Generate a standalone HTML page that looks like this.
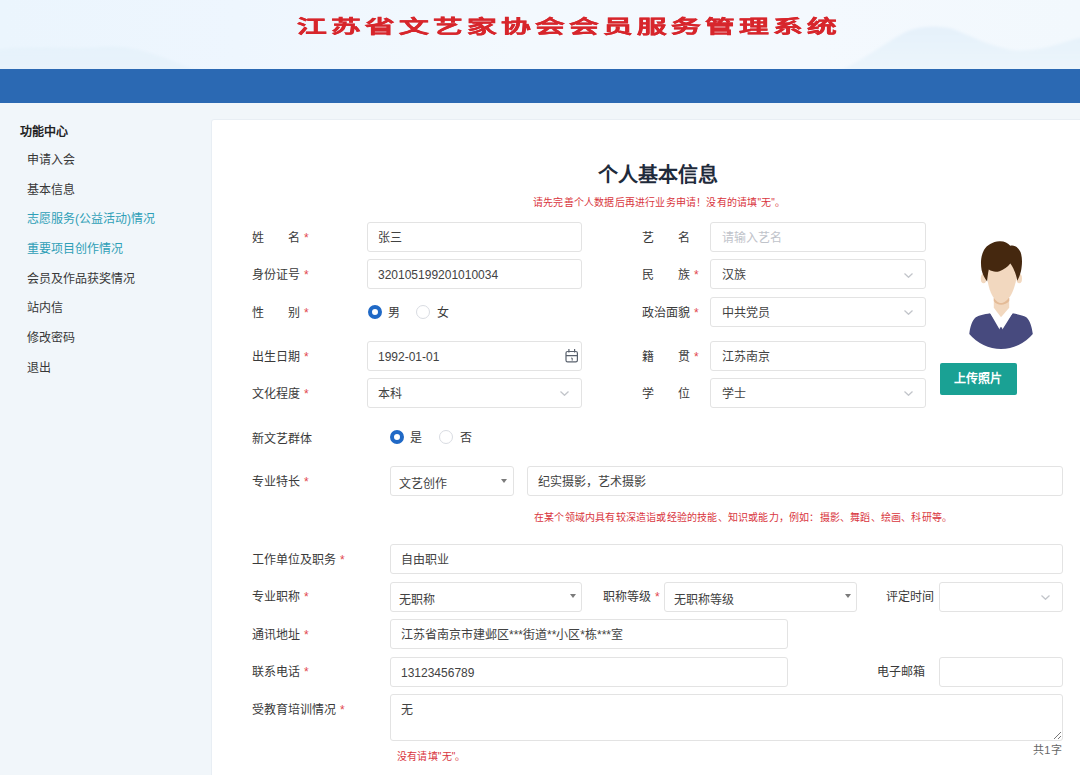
<!DOCTYPE html>
<html lang="zh-CN">
<head>
<meta charset="utf-8">
<title>江苏省文艺家协会会员服务管理系统</title>
<style>
*{box-sizing:border-box;margin:0;padding:0}
html,body{width:1080px;height:775px;overflow:hidden}
body{position:relative;background:#f1f6fa;font-family:"Liberation Sans",sans-serif;font-size:12px;color:#333;line-height:1}
.abs{position:absolute}
/* header */
#hd{position:absolute;left:0;top:0;width:1080px;height:69px;background:linear-gradient(90deg,#ebf5fd 0%,#eef6fe 22%,#f3f9fe 48%,#f4f9fe 75%,#f2f8fd 100%);overflow:hidden}
#hd svg{position:absolute;left:0;top:0}
#hd h1{position:absolute;left:296.5px;top:12.5px;width:400px;height:28px;font-family:"Liberation Serif",serif;font-weight:bold;font-size:18px;line-height:28px;color:#d7262c;white-space:nowrap;transform-origin:0 50%;transform:scaleX(1.65);letter-spacing:2.6px;-webkit-text-stroke:.35px #d7262c}
#bar{position:absolute;left:0;top:68.5px;width:1080px;height:34px;background:#2b69b3}
/* sidebar */
#side{position:absolute;left:0;top:103px;width:212px}
#side .t{position:absolute;left:20px;top:22px;font-weight:bold;font-size:12px;line-height:14px;color:#222;white-space:nowrap}
#side a{position:absolute;left:27px;font-size:12px;line-height:14px;color:#383838;text-decoration:none;white-space:nowrap}
#side a.on{color:#2f9fb7}
/* panel */
#panel{position:absolute;left:211px;top:119px;width:880px;height:700px;background:#fff;border:1px solid #e8eef4;border-radius:3px}
h2{position:absolute;left:538px;top:161px;width:240px;text-align:center;font-size:20px;line-height:28px;font-weight:bold;color:#1f2b3b;white-space:nowrap}
.tip{position:absolute;font-size:10px;letter-spacing:.2px;line-height:12px;color:#d9363e;white-space:nowrap}
.lb{position:absolute;font-size:12px;line-height:14px;color:#3a3a3a;white-space:nowrap}
.lb i{font-style:normal;color:#e2474e;margin-left:4px}
.lb .sp{display:inline-block;width:24px}
.in{position:absolute;height:30px;border:1px solid #e3e3e3;border-radius:3px;background:#fff;font-size:12px;line-height:28px;padding-top:1px;color:#424242;padding-left:10px;white-space:nowrap;overflow:hidden}
.in.ph{color:#bfc3ca}
.chev{position:absolute;width:9px;height:5px}
.tri{position:absolute;width:0;height:0;border-left:3.5px solid transparent;border-right:3.5px solid transparent;border-top:4.5px solid #7b7b7b}
.rd{position:absolute;width:14px;height:14px;border-radius:50%;border:1px solid #d9dce2;background:#fff}
.rd.on{border:4.5px solid #2069c6;background:#fff}
.rt{position:absolute;font-size:12px;line-height:14px;color:#3a3a3a}
#btn{position:absolute;left:939.5px;top:363px;width:77.5px;height:32px;background:#1aa194;border-radius:2px;color:#fff;font-weight:bold;font-size:12px;line-height:32px;text-align:center}
.cnt{position:absolute;font-size:11px;letter-spacing:.3px;line-height:12px;color:#666;white-space:nowrap}
</style>
</head>
<body>
<div id="hd">
<svg width="1080" height="69" viewBox="0 0 1080 69">
<defs>
<linearGradient id="mg" x1="0" y1="0" x2="0" y2="1"><stop offset="0" stop-color="#e4f0fa" stop-opacity=".95"/><stop offset="1" stop-color="#eaf4fb" stop-opacity=".75"/></linearGradient>
<linearGradient id="lg" x1="0" y1="0" x2="0" y2="1"><stop offset="0" stop-color="#e6f2fb" stop-opacity=".9"/><stop offset="1" stop-color="#e7f2fb" stop-opacity=".7"/></linearGradient>
<filter id="bl" x="-5%" y="-20%" width="110%" height="140%"><feGaussianBlur stdDeviation="1.6"/></filter>
</defs>
<g filter="url(#bl)">
<path d="M836 72 C862 62 888 40 908 31 C920 26 945 25 958 31 C975 38 990 46 1012 50 C1040 53 1060 42 1084 37 L1084 72 Z" fill="url(#mg)"/>
<path d="M-5 50 C30 44 70 50 100 47 C135 44 160 56 200 72 L-5 72 Z" fill="url(#lg)"/>
</g>
</svg>
<h1>江苏省文艺家协会会员服务管理系统</h1>
</div>
<div id="bar"></div>

<div id="side">
<div class="t">功能中心</div>
<a style="top:50px">申请入会</a>
<a style="top:79.5px">基本信息</a>
<a class="on" style="top:109px">志愿服务(公益活动)情况</a>
<a class="on" style="top:138.5px">重要项目创作情况</a>
<a style="top:169px">会员及作品获奖情况</a>
<a style="top:198px">站内信</a>
<a style="top:228px">修改密码</a>
<a style="top:257.5px">退出</a>
</div>

<div id="panel"></div>
<h2>个人基本信息</h2>
<div class="tip" style="left:533px;top:197px">请先完善个人数据后再进行业务申请！没有的请填"无"。</div>

<!-- FORM -->

<!-- row 1 -->
<label class="lb" style="left:252px;top:231px">姓<span class="sp"></span>名<i>*</i></label>
<div class="in" style="left:367px;top:222px;width:215px">张三</div>
<label class="lb" style="left:642px;top:231px">艺<span class="sp"></span>名</label>
<div class="in ph" style="left:710px;top:222px;width:216px;padding-left:11px">请输入艺名</div>

<!-- row 2 -->
<label class="lb" style="left:252px;top:268px">身份证号<i>*</i></label>
<div class="in" style="left:367px;top:259px;width:215px">320105199201010034</div>
<label class="lb" style="left:642px;top:268px">民<span class="sp"></span>族<i>*</i></label>
<div class="in" style="left:710px;top:259px;width:216px;padding-left:11px">汉族</div>
<svg class="chev" style="left:903.5px;top:272.5px" viewBox="0 0 9 5"><path d="M0.5 0.5 L4.5 4.3 L8.5 0.5" fill="none" stroke="#c2c5ca" stroke-width="1.25"/></svg>

<!-- row 3 -->
<label class="lb" style="left:252px;top:306px">性<span class="sp"></span>别<i>*</i></label>
<span class="rd on" style="left:367.5px;top:305px"></span><span class="rt" style="left:387.5px;top:306px">男</span>
<span class="rd" style="left:416px;top:305px"></span><span class="rt" style="left:436.5px;top:306px">女</span>
<label class="lb" style="left:642px;top:306px">政治面貌<i>*</i></label>
<div class="in" style="left:710px;top:297px;width:216px;padding-left:11px">中共党员</div>
<svg class="chev" style="left:903.5px;top:310px" viewBox="0 0 9 5"><path d="M0.5 0.5 L4.5 4.3 L8.5 0.5" fill="none" stroke="#c2c5ca" stroke-width="1.25"/></svg>

<!-- row 4 -->
<label class="lb" style="left:252px;top:350px">出生日期<i>*</i></label>
<div class="in" style="left:367px;top:341px;width:215px">1992-01-01</div>
<svg class="abs" style="left:565.4px;top:348.4px" width="14" height="15" viewBox="0 0 14 15"><rect x="1" y="3.5" width="11.4" height="10.4" rx="1.6" fill="none" stroke="#59616d" stroke-width="1.2"/><path d="M1 7.6H12.4M3.9 1V4.6M9.6 1V4.6" stroke="#59616d" stroke-width="1.2" fill="none"/><path d="M6.2 10.1H7.2V12.6" stroke="#59616d" stroke-width="1" fill="none"/></svg>
<label class="lb" style="left:642px;top:350px">籍<span class="sp"></span>贯<i>*</i></label>
<div class="in" style="left:710px;top:341px;width:216px;padding-left:11px">江苏南京</div>

<!-- row 5 -->
<label class="lb" style="left:252px;top:387px">文化程度<i>*</i></label>
<div class="in" style="left:367px;top:378px;width:215px">本科</div>
<svg class="chev" style="left:559.5px;top:391px" viewBox="0 0 9 5"><path d="M0.5 0.5 L4.5 4.3 L8.5 0.5" fill="none" stroke="#c2c5ca" stroke-width="1.25"/></svg>
<label class="lb" style="left:642px;top:387px">学<span class="sp"></span>位</label>
<div class="in" style="left:710px;top:378px;width:216px;padding-left:11px">学士</div>
<svg class="chev" style="left:903.5px;top:391px" viewBox="0 0 9 5"><path d="M0.5 0.5 L4.5 4.3 L8.5 0.5" fill="none" stroke="#c2c5ca" stroke-width="1.25"/></svg>

<!-- avatar -->
<svg class="abs" style="left:966px;top:238px" width="70" height="113" viewBox="0 0 70 113">
<path d="M24.2 75.2 C18 76.3 12.5 77.3 9.8 79.3 C5.6 82.8 4 90 3.3 96.1 A41.5 41.5 0 0 0 66.8 96.1 C66 90 64.4 82.8 60.3 79.3 C57.5 77.3 52 76.3 46.6 75.2 L35 90 Z" fill="#474a7e"/>
<path d="M27.8 69.5 L24.2 75.2 L33.6 91.4 L35 83.5 L36.4 91.4 L46.6 75.2 L43.2 69.5 L35 79.5 Z" fill="#fff"/>
<path d="M27.8 60 L43.2 60 L43.2 69.8 L35 79.3 L27.8 69.8 Z" fill="#f2d8bf"/>
<path d="M27.8 63 C31 68 39 68 43.2 63 L43.2 60 L27.8 60 Z" fill="#e4bb97"/>
<ellipse cx="17.6" cy="40.5" rx="2.8" ry="4.8" fill="#f2d8bf"/><ellipse cx="53.2" cy="40.5" rx="2.8" ry="4.8" fill="#f2d8bf"/>
<path d="M20.5 26 C20.5 40 22.3 50 26 57 C29 62.5 32 65.1 35 65.1 C38 65.1 41.5 62.5 45 57 C48.7 50 51.5 40 51.5 26 Z" fill="#f2d8bf"/>
<path d="M21.1 43.4 C18.5 40 16.5 36 15.6 32 C14.5 26 14.6 18 18 12 C21 7 26.5 3.6 33.5 3.2 C38 3 42 4.8 44.3 7.8 C48.5 6.8 52.5 9.5 54.5 14 C56.5 19 56.3 27 55 33 C54.2 36.5 52.8 40 51.3 42.7 C50.5 39 49.6 35.5 48.2 32.6 C47.2 30 45.8 27.5 44.3 25.6 C41.5 29 38 31.8 33.5 33.2 C30 34.2 26 33.8 22.8 31.6 C22 35 21.6 39 21.1 43.4 Z" fill="#45280f"/>
</svg>
<div id="btn">上传照片</div>

<!-- 新文艺群体 -->
<label class="lb" style="left:252px;top:431.5px">新文艺群体</label>
<span class="rd on" style="left:390px;top:430px"></span><span class="rt" style="left:410px;top:431px">是</span>
<span class="rd" style="left:439px;top:430px"></span><span class="rt" style="left:459.5px;top:431px">否</span>

<!-- 专业特长 -->
<label class="lb" style="left:252px;top:475px">专业特长<i>*</i></label>
<div class="in" style="left:390px;top:466px;width:124px;padding-top:3px;padding-left:8px">文艺创作</div>
<span class="tri" style="left:500.5px;top:479px"></span>
<div class="in" style="left:527px;top:466px;width:536px">纪实摄影，艺术摄影</div>
<div class="tip" style="left:534px;top:511.5px">在某个领域内具有较深造诣或经验的技能、知识或能力，例如：摄影、舞蹈、绘画、科研等。</div>

<!-- 工作单位及职务 -->
<label class="lb" style="left:252px;top:553px">工作单位及职务<i>*</i></label>
<div class="in" style="left:390px;top:544px;width:673px">自由职业</div>

<!-- 专业职称 -->
<label class="lb" style="left:252px;top:590px">专业职称<i>*</i></label>
<div class="in" style="left:390px;top:582px;width:192px;padding-top:2.5px;padding-left:8px">无职称</div>
<span class="tri" style="left:569.5px;top:594px"></span>
<label class="lb" style="left:603px;top:590px">职称等级<i>*</i></label>
<div class="in" style="left:664px;top:582px;width:192.5px;padding-top:2.5px;padding-left:9px">无职称等级</div>
<span class="tri" style="left:844.5px;top:594px"></span>
<label class="lb" style="left:885.5px;top:590px">评定时间</label>
<div class="in" style="left:939px;top:582px;width:124px"></div>
<svg class="chev" style="left:1041px;top:594.5px" viewBox="0 0 9 5"><path d="M0.5 0.5 L4.5 4.3 L8.5 0.5" fill="none" stroke="#c2c5ca" stroke-width="1.25"/></svg>

<!-- 通讯地址 -->
<label class="lb" style="left:252px;top:628px">通讯地址<i>*</i></label>
<div class="in" style="left:390px;top:619px;width:398px">江苏省南京市建邺区***街道**小区*栋***室</div>

<!-- 联系电话 -->
<label class="lb" style="left:252px;top:665px">联系电话<i>*</i></label>
<div class="in" style="left:390px;top:657px;width:398px">13123456789</div>
<label class="lb" style="left:877.3px;top:665px">电子邮箱</label>
<div class="in" style="left:939px;top:657px;width:124px"></div>

<!-- 受教育培训情况 -->
<label class="lb" style="left:252px;top:703px">受教育培训情况<i>*</i></label>
<div class="in" style="left:390px;top:694px;width:673px;height:47px">无</div>
<svg class="abs" style="left:1052px;top:730px" width="10" height="10" viewBox="0 0 10 10"><path d="M9 2L2 9M9 6L6 9" stroke="#777" stroke-width="1" fill="none"/></svg>
<div class="tip" style="left:397px;top:750.5px">没有请填"无"。</div>
<div class="cnt" style="left:1033px;top:744px">共1字</div>

</body>
</html>
